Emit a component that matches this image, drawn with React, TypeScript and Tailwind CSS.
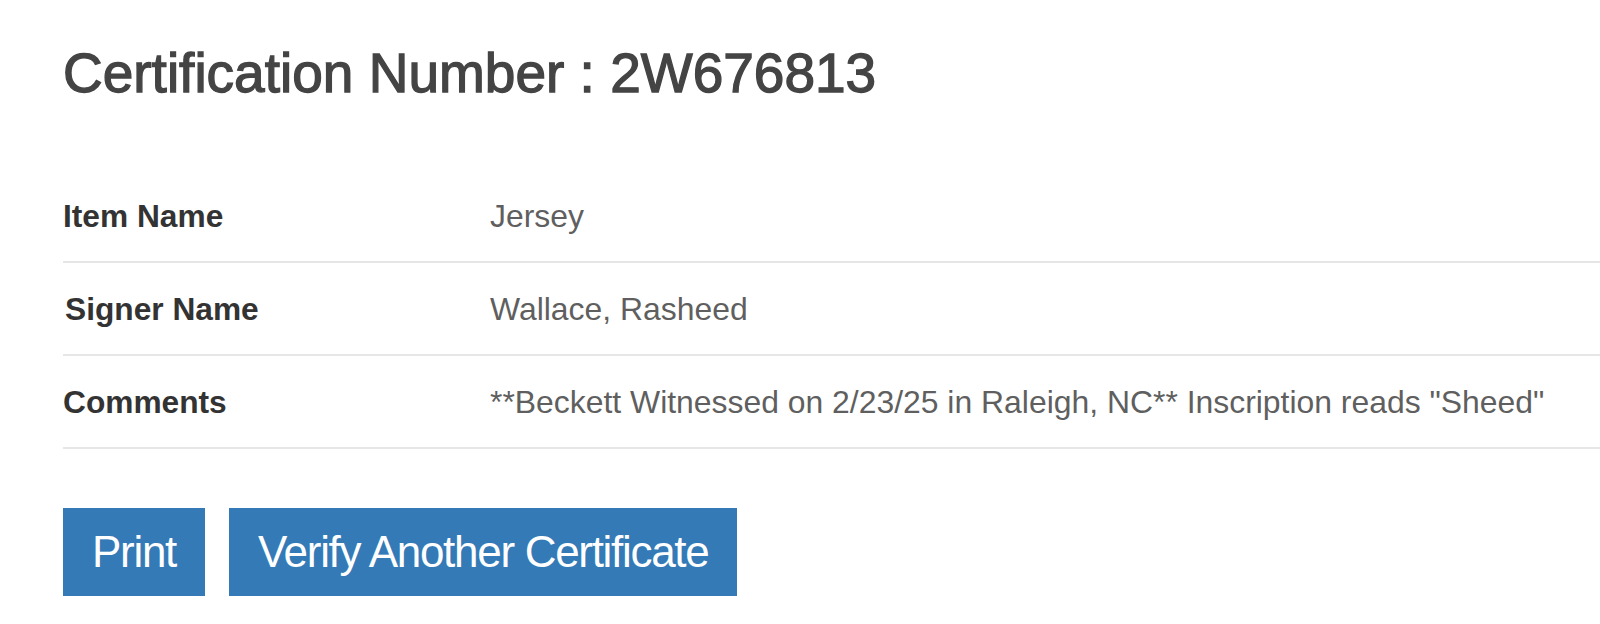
import React from "react";

const rows = [
  { label: "Item Name", value: "Jersey", shift: false },
  { label: "Signer Name", value: "Wallace, Rasheed", shift: true },
  {
    label: "Comments",
    value: '**Beckett Witnessed on 2/23/25 in Raleigh, NC** Inscription reads "Sheed"',
    shift: false,
  },
];

export default function App() {
  return (
    <div className="min-h-[624px] w-[1600px] overflow-hidden bg-white pl-[63px] font-['Liberation_Sans',Arial,sans-serif]">
      <h1 className="pt-[46px] text-[55px] leading-[55px] font-normal text-[#444] [-webkit-text-stroke:1.3px_#444]">
        Certification Number : 2W676813
      </h1>
      <div className="mt-[69px]">
        {rows.map((r, i) => (
          <div
            key={r.label}
            className={`flex pt-[24px] pb-[23px] leading-[44px] ${i > 0 ? "border-t-2 border-[#e6e6e6]" : ""}`}
          >
            <div className={`w-[427px] shrink-0 text-[31.7px] font-bold text-[#333] ${r.shift ? "pl-[2px]" : ""}`}>
              {r.label}
            </div>
            <div className="text-[31.9px] text-[#5f5f5f] whitespace-nowrap">{r.value}</div>
          </div>
        ))}
        <div className="border-t-2 border-[#e6e6e6]" />
      </div>
      <div className="mt-[59px] flex gap-[24px]">
        <button className="h-[88px] bg-[#337ab7] px-[29px] text-[44px] tracking-[-1.3px] text-white">
          Print
        </button>
        <button className="h-[88px] bg-[#337ab7] px-[29px] text-[44px] tracking-[-1.3px] text-white">
          Verify Another Certificate
        </button>
      </div>
    </div>
  );
}
